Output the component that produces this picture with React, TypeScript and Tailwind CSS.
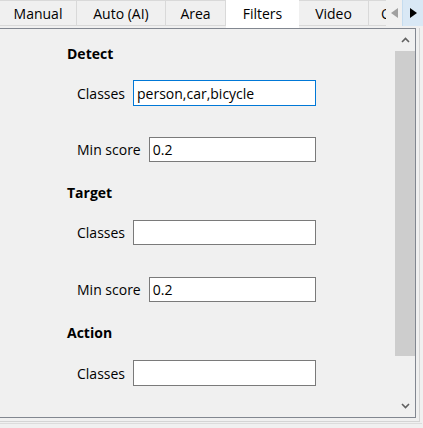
import React from "react";

const Chevron = ({ up }: { up?: boolean }) => (
  <svg width="9" height="6" viewBox="0 0 9 6">
    <polyline
      points={up ? "1,5 4.5,1.5 8,5" : "1,1 4.5,4.5 8,1"}
      fill="none"
      stroke="#606060"
      strokeWidth="1.6"
    />
  </svg>
);

const Field = ({
  label,
  value,
  focused,
  top,
  h,
}: {
  label: string;
  value?: string;
  focused?: boolean;
  top: string;
  h: string;
}) => (
  <div className={`flex items-center pl-[77px] pr-[79px] ${top}`}>
    <span className="leading-[19px] mr-[8px] whitespace-nowrap">{label}</span>
    <div
      className={`flex-1 ${h} bg-white border flex items-center pl-[3px] leading-[19px] ${
        focused ? "border-[#0078d7]" : "border-[#7a7a7a]"
      }`}
    >
      {value}
    </div>
  </div>
);

export default function App() {
  const tabs = [
    { name: "Manual", w: "w-[77px]" },
    { name: "Auto (AI)", w: "w-[89px]" },
    { name: "Area", w: "w-[60px]" },
    { name: "Filters", w: "w-[73px]", sel: true },
    { name: "Video", w: "w-[70px]" },
  ];
  return (
    <div className="w-[423px] h-[428px] bg-[#f0f0f0] overflow-hidden font-['Open_Sans',sans-serif] text-[14px] text-black">
      <div className="h-[28px] flex">
        <div className="w-[386px] h-[28px] flex overflow-hidden">
          {tabs.map((t) =>
            t.sel ? (
              <div
                key={t.name}
                className={`${t.w} shrink-0 h-[28px] bg-white flex items-center justify-center pb-[1px]`}
              >
                {t.name}
              </div>
            ) : (
              <div
                key={t.name}
                className={`${t.w} shrink-0 h-[26px] bg-[#f0f0f0] border-r border-b border-t border-[#d9d9d9] flex items-center justify-center pt-[1px]`}
              >
                {t.name}
              </div>
            )
          )}
          <div className="w-[17px] shrink-0 h-[26px] bg-[#f0f0f0] border-t border-b border-[#d9d9d9] pl-[12px] pt-[1px] flex items-center overflow-hidden">
            <span className="w-[5px] overflow-hidden inline-block leading-[19px]">O</span>
          </div>
        </div>
        <div className="w-[16px] h-[26px] bg-[#f0f0f0] flex items-center justify-center">
          <svg width="7" height="10" viewBox="0 0 7 10">
            <polygon points="7,0 7,10 0,5" fill="#a0a0a0" />
          </svg>
        </div>
        <div className="w-[21px] h-[26px] bg-[#d9e8f5] border-l border-[#c5dcef] flex items-center justify-center">
          <svg width="7" height="10" viewBox="0 0 7 10">
            <polygon points="0,0 0,10 7,5" fill="#000" />
          </svg>
        </div>
      </div>
      <div className="w-[422px] pb-[1px] pr-[2px] border-b border-[#dcdcdc]">
        <div className="w-[420px] pr-[3px] pb-[3px] border-r border-b border-[#d4d4d4]">
          <div className="w-[416px] h-[390px] border-t border-r border-b border-[#828790] flex">
            <div className="flex-1 flex flex-col pt-[15px]">
              <div className="pl-[67px] font-bold leading-[19px]">Detect</div>
              <Field label="Classes" value="person,car,bicycle" focused top="mt-[17px]" h="h-[26px]" />
              <Field label="Min score" value="0.2" top="mt-[31px]" h="h-[25px]" />
              <div className="pl-[67px] font-bold leading-[19px] mt-[21px]">Target</div>
              <Field label="Classes" value="" top="mt-[18px]" h="h-[25px]" />
              <Field label="Min score" value="0.2" top="mt-[32px]" h="h-[25px]" />
              <div className="pl-[67px] font-bold leading-[19px] mt-[21px]">Action</div>
              <Field label="Classes" value="" top="mt-[18px]" h="h-[26px]" />
            </div>
            <div className="w-[20px] flex flex-col bg-[#f0f0f0]">
              <div className="h-[22px] flex items-center justify-center">
                <Chevron up />
              </div>
              <div className="h-[305px] bg-[#cdcdcd]" />
              <div className="flex-1" />
              <div className="h-[22px] flex items-center justify-center">
                <Chevron />
              </div>
            </div>
          </div>
        </div>
      </div>
    </div>
  );
}
